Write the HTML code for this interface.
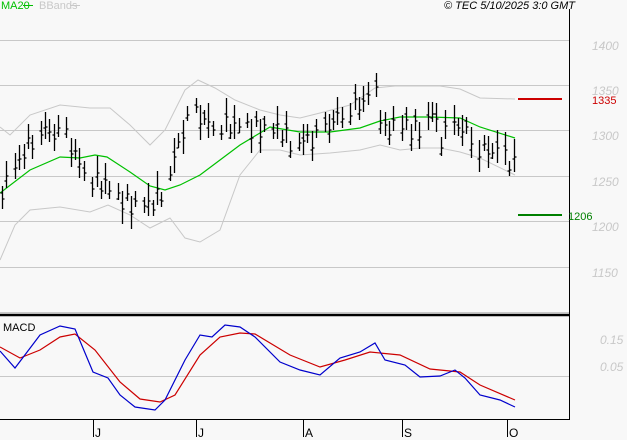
<!DOCTYPE html><html><head><meta charset="utf-8"><style>
body{margin:0;width:627px;height:440px;background:#f8f8f8;overflow:hidden;font-family:"Liberation Sans",sans-serif}
svg{position:absolute;left:0;top:0}
text{font-family:"Liberation Sans",sans-serif}
</style></head><body>
<svg width="627" height="440" viewBox="0 0 627 440" xmlns="http://www.w3.org/2000/svg">
<rect width="627" height="440" fill="#f8f8f8"/>
<g stroke="#c8c8c8" stroke-width="1">
<line x1="0" y1="40.5" x2="569" y2="40.5"/><line x1="0" y1="85.5" x2="569" y2="85.5"/>
<line x1="0" y1="130.5" x2="569" y2="130.5"/><line x1="0" y1="176.5" x2="569" y2="176.5"/>
<line x1="0" y1="221.5" x2="569" y2="221.5"/><line x1="0" y1="267.5" x2="569" y2="267.5"/>
<line x1="0" y1="312.5" x2="569" y2="312.5"/><line x1="0" y1="376.5" x2="569" y2="376.5"/>
</g>
<g fill="#c8c8c8" font-size="12" font-style="italic">
<text x="592" y="50">1400</text><text x="592" y="95">1350</text><text x="592" y="140">1300</text>
<text x="592" y="186">1250</text><text x="592" y="231">1200</text><text x="592" y="277">1150</text>
<text x="600" y="344">0.15</text><text x="600" y="371">0.05</text>
</g>
<line x1="569.5" y1="9" x2="569.5" y2="420" stroke="#000"/>
<line x1="0" y1="315" x2="569" y2="315" stroke="#000" stroke-width="2.5"/>
<line x1="0" y1="419.5" x2="569" y2="419.5" stroke="#000"/>
<g stroke="#000"><line x1="93.5" y1="419" x2="93.5" y2="437"/><line x1="196.5" y1="419" x2="196.5" y2="437"/><line x1="303.5" y1="419" x2="303.5" y2="437"/><line x1="402.5" y1="419" x2="402.5" y2="437"/><line x1="507.5" y1="419" x2="507.5" y2="437"/></g>
<g font-size="12" fill="#000"><text x="95" y="437">J</text><text x="198" y="437">J</text><text x="305" y="437">A</text><text x="404" y="437">S</text><text x="509" y="437">O</text></g>
<text x="1" y="9" font-size="11" fill="#00c000">MA20</text><line x1="23" y1="5.5" x2="33" y2="5.5" stroke="#00c000"/>
<text x="39" y="9" font-size="11" fill="#c8c8c8">BBands</text><line x1="70" y1="5.5" x2="80" y2="5.5" stroke="#c8c8c8"/>
<text x="575" y="9" font-size="11" font-style="italic" text-anchor="end" fill="#000">© TEC 5/10/2025 3:0 GMT</text>
<text x="3" y="331" font-size="11" fill="#000">MACD</text>
<line x1="518" y1="99" x2="562" y2="99" stroke="#cc0000" stroke-width="2"/>
<text x="592" y="104" font-size="11" fill="#cc0000">1335</text>
<line x1="518" y1="215" x2="562" y2="215" stroke="#008000" stroke-width="2"/>
<text x="568" y="220" font-size="11" fill="#008000">1206</text>
<g fill="none" stroke="#c8c8c8">
<polyline points="0,127 10,135 30,115 60,105 90,108 110,108 130,125 150,145 165,130 185,90 198,80 215,88 235,100 260,110 280,115 300,118 320,113 350,105 375,88 395,86 420,86 440,86 460,89 480,98 515,99"/>
<polyline points="0,260 15,225 30,210 60,207 90,212 108,205 130,215 150,228 170,218 185,238 200,242 220,230 240,175 260,150 280,150 300,155 330,153 360,150 380,145 400,150 420,148 440,148 460,152 480,158 515,175"/>
</g>
<polyline fill="none" stroke="#00c000" stroke-width="1.2" points="0,193 30,170 60,157 80,158 95,155 107,157 130,172 150,186 165,190 180,185 200,175 220,160 240,145 270,127 300,132 330,132 360,128 380,121 400,117 430,117 460,118 480,127 515,138"/>
<g id="bars" stroke="#000" fill="none"></g>
<polyline fill="none" stroke="#cc0000" stroke-width="1.2" points="0,347 20,358 40,350 60,337 75,334 95,350 120,382 140,399 160,402 175,395 200,355 220,337 240,333 255,334 290,355 320,367 345,360 370,352 400,355 430,369 460,372 480,385 515,400"/>
<polyline fill="none" stroke="#0000cc" stroke-width="1.2" points="0,351 15,368 40,335 60,326 75,329 93,372 108,378 120,395 135,407 155,410 165,400 185,360 200,335 212,337 225,325 240,327 255,337 280,362 300,370 320,375 340,358 360,352 375,343 385,360 405,365 420,377 440,376 455,370 465,378 480,395 500,400 515,407"/>
</svg>
<script>
var k=[[2,190],[12,175],[25,150],[40,128],[55,135],[65,135],[80,165],[92,180],[105,185],[120,200],[135,207],[150,205],[160,195],[170,170],[185,125],[195,115],[210,125],[225,125],[240,128],[260,130],[280,130],[292,145],[300,140],[315,140],[330,125],[345,108],[360,105],[375,90],[385,135],[395,120],[410,130],[420,130],[432,110],[440,140],[455,125],[470,135],[480,150],[495,152],[515,165]];
function f(x){for(var i=0;i<k.length-1;i++){if(x<=k[i+1][0]){var t=(x-k[i][0])/(k[i+1][0]-k[i][0]);return k[i][1]+t*(k[i+1][1]-k[i][1]);}}return k[k.length-1][1];}
var d="";var n=0;for(var x=2;x<=515;x+=4.3){n++;if(n%6==3)continue;var xx=Math.round(x)+0.5;var c=f(x)+9*Math.sin(x*0.83);var r=6+10*Math.abs(Math.sin(x*0.37)*Math.cos(x*1.1));var h=c-r-3;var l=c+r;var o=c+6*Math.sin(x*2.3);
d+="M"+xx+" "+h.toFixed(0)+"V"+l.toFixed(0)+"M"+(xx-2)+" "+o.toFixed(0)+"h2M"+xx+" "+c.toFixed(0)+"h2";}
var p=document.createElementNS("http://www.w3.org/2000/svg","path");p.setAttribute("d",d);p.setAttribute("stroke-width","1.3");document.getElementById("bars").appendChild(p);
</script>
</body></html>
